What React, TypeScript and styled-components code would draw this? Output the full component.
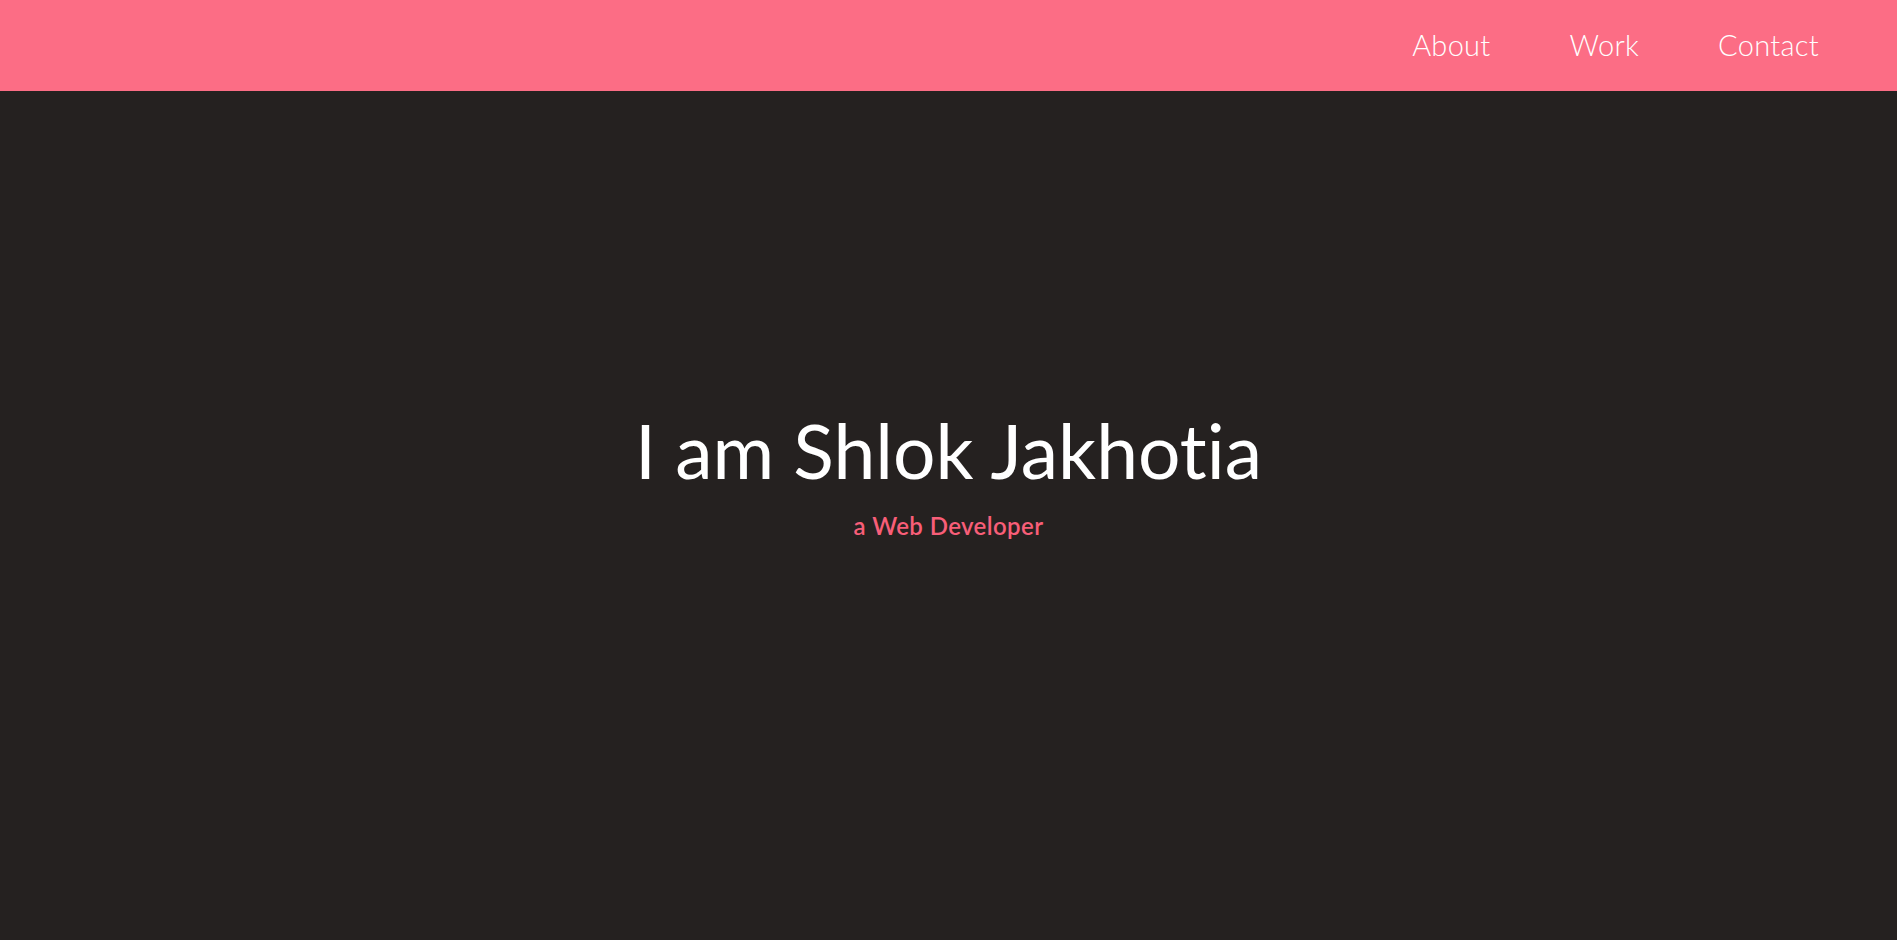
import React from "react";
import styled, { createGlobalStyle } from "styled-components";

const Global = createGlobalStyle`
  html, body { margin: 0; padding: 0; }
  body {
    background: #252120;
    font-family: "Lato", "Noto Sans", sans-serif;
    overflow: hidden;
  }
`;

const Page = styled.div`
  min-height: 940px;
  display: flex;
  flex-direction: column;
  background: #252120;
`;

const Header = styled.header`
  height: 91px;
  background: #fc6d85;
  display: flex;
  align-items: center;
  justify-content: flex-end;
  padding-right: 78px;
  padding-bottom: 2px;
  box-sizing: border-box;
`;

const Nav = styled.nav`
  display: flex;
  align-items: center;
  gap: 79px;
`;

const NavLink = styled.a`
  color: #ffffff;
  font-family: "Lato", sans-serif;
  font-weight: 300;
  font-size: 29px;
  letter-spacing: 0.3px;
  text-decoration: none;
  line-height: 1;
  font-variant-ligatures: none;
`;

const Hero = styled.main`
  flex: 1;
  display: flex;
  flex-direction: column;
  align-items: center;
  padding-top: 322px;
`;

const Title = styled.h1`
  margin: 0;
  color: #ffffff;
  font-family: "Lato", sans-serif;
  font-weight: 400;
  font-size: 75px;
  line-height: 1;
  font-variant-ligatures: none;
`;

const Subtitle = styled.p`
  margin: 26px 0 0;
  color: #f85e78;
  font-family: "Lato", sans-serif;
  font-weight: 600;
  font-size: 24px;
  letter-spacing: 0.4px;
  line-height: 1;
  font-variant-ligatures: none;
`;

export default function App() {
  return (
    <Page>
      <Global />
      <Header>
        <Nav>
          <NavLink href="#about">About</NavLink>
          <NavLink href="#work">Work</NavLink>
          <NavLink href="#contact">Contact</NavLink>
        </Nav>
      </Header>
      <Hero>
        <Title>I am Shlok Jakhotia</Title>
        <Subtitle>a Web Developer</Subtitle>
      </Hero>
    </Page>
  );
}
